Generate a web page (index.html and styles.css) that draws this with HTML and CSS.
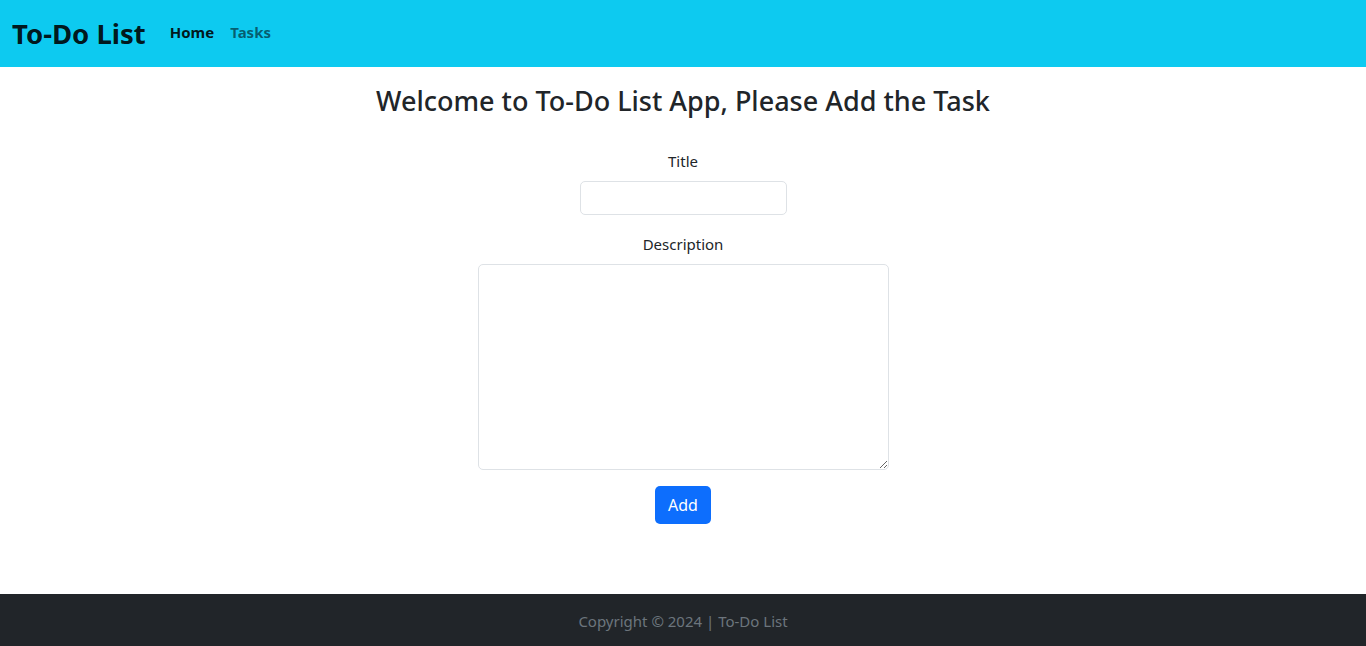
FILE: index.html
```html
<!DOCTYPE html>
<html lang="en">
<head>
<meta charset="utf-8">
<title>To-Do List</title>
<link rel="stylesheet" href="styles.css">
</head>
<body>
<nav class="navbar">
  <a class="brand" href="#">To-Do List</a>
  <ul class="nav">
    <li><a class="nav-link active" href="#">Home</a></li>
    <li><a class="nav-link" href="#">Tasks</a></li>
  </ul>
</nav>
<main class="main">
  <h2 class="title">Welcome to To-Do List App, Please Add the Task</h2>
  <form class="form">
    <div class="field">
      <label class="label" for="title">Title</label>
      <input class="input" id="title" type="text">
    </div>
    <div class="field field-last">
      <label class="label" for="desc">Description</label>
      <textarea class="textarea" id="desc"></textarea>
    </div>
    <button class="btn" type="button">Add</button>
  </form>
</main>
<footer class="footer">Copyright © 2024 | To-Do List</footer>
</body>
</html>
```
FILE: styles.css
```css
* { box-sizing: border-box; }
html, body { margin: 0; padding: 0; }
body {
  font-family: "Noto Sans", "Open Sans", sans-serif;
  font-size: 16px;
  color: #212529;
  background: #fff;
  min-height: 646px;
  display: flex;
  flex-direction: column;
}
.navbar {
  background: #0dcaf0;
  height: 67px;
  display: flex;
  align-items: center;
  padding: 0 12px;
}
.brand {
  font-size: 27.5px;
  font-weight: 700;
  color: rgba(0,0,0,0.9);
  text-decoration: none;
  margin-right: 16px;
  margin-top: -1px;
}
.nav {
  list-style: none;
  margin: 0 0 3px;
  padding: 0;
  display: flex;
}
.nav-link {
  display: block;
  padding: 8px;
  font-size: 15px;
  font-weight: 700;
  color: rgba(0,0,0,0.55);
  text-decoration: none;
}
.nav-link.active { color: rgba(0,0,0,0.9); }
.main {
  flex: 1;
  display: flex;
  flex-direction: column;
  align-items: center;
}
.title {
  font-size: 27px;
  font-weight: 500;
  margin: 18px 0 0;
  line-height: 1.2;
}
.form {
  margin-top: 32px;
  display: flex;
  flex-direction: column;
  align-items: center;
}
.field {
  display: flex;
  flex-direction: column;
  align-items: center;
  margin-bottom: 17px;
}
.field-last { margin-bottom: 16px; }
.label {
  font-size: 15px;
  line-height: 24px;
  margin-bottom: 8px;
}
.input {
  width: 207px;
  height: 34px;
  border: 1px solid #dee2e6;
  border-radius: 5px;
  font: inherit;
  padding: 4px 10px;
}
.textarea {
  width: 411px;
  height: 206px;
  border: 1px solid #dee2e6;
  border-radius: 5px;
  font: inherit;
  padding: 6px 12px;
  resize: vertical;
}
.btn {
  width: 56px;
  height: 38px;
  background: #0d6efd;
  color: #fff;
  border: 0;
  border-radius: 5px;
  font-family: inherit;
  font-size: 16px;
}
.footer {
  background: #212529;
  color: #6c757d;
  height: 52px;
  display: flex;
  align-items: center;
  justify-content: center;
  font-size: 15px;
  padding-top: 2px;
}
```
